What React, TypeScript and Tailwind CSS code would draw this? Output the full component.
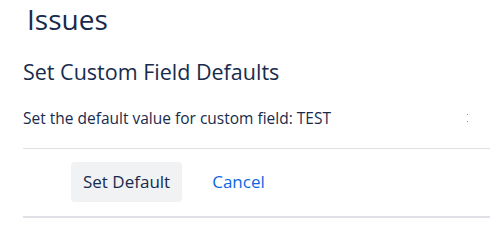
import React from "react";

export default function App() {
  return (
    <div
      className="h-[226px] w-[490px] overflow-hidden bg-white pl-[23px] text-[#172b4d]"
      style={{ fontFamily: '"Open Sans", "Noto Sans", Arial, sans-serif' }}
    >
      <h1 className="pl-[4px] text-[28px] leading-[38px] font-normal">Issues</h1>

      <h2 className="mt-[21px] text-[21.5px] leading-[26px] font-normal">
        Set Custom Field Defaults
      </h2>

      <div className="mt-[21px] flex items-center">
        <p className="text-[15.5px] leading-[24px]">
          Set the default value for custom field: TEST
        </p>
        <span className="ml-auto mr-[22px] flex flex-col gap-[6px]">
          <span className="block h-px w-px bg-[#5b9bd5]" />
          <span className="block h-px w-px bg-[#5b9bd5]" />
        </span>
      </div>

      <div className="mt-[18px] border-t border-[#dfe1e6] pt-[13px] pb-[14px] pl-[48px]">
        <div className="flex items-center gap-[18px]">
          <button className="h-[40px] rounded-[4px] bg-[#f1f2f4] px-[12px] text-[17px] text-[#172b4d]">
            Set Default
          </button>
          <a href="#" className="px-[12px] text-[17px] text-[#0c66e4]">
            Cancel
          </a>
        </div>
      </div>

      <div className="border-t-2 border-[#dfe1e6]" />
    </div>
  );
}
